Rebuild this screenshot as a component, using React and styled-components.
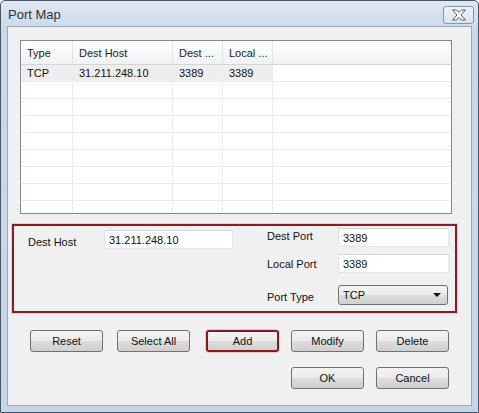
import React from "react";
import styled, { createGlobalStyle } from "styled-components";

const Global = createGlobalStyle`
  html, body { margin: 0; padding: 0; background: #fff; }
  body { font-family: "Liberation Sans", Arial, sans-serif; font-size: 11px; }
`;

const Window = styled.div`
  width: 479px;
  height: 413px;
  box-sizing: border-box;
  border: 1px solid #4a5563;
  border-radius: 5px 5px 0 0;
  background: linear-gradient(#dfe8f3, #c9d8ea 30px, #c6d6e9);
  display: flex;
  flex-direction: column;
`;

const TitleBar = styled.div`
  height: 25px;
  display: flex;
  align-items: center;
  justify-content: space-between;
  padding: 0 4px 0 7px;
`;

const Title = styled.span`
  font-size: 13px;
  color: #333;
  margin-top: 2px;
`;

const CloseButton = styled.div`
  width: 29px;
  height: 16px;
  margin-top: 2px;
  border: 1px solid #8994a3;
  border-radius: 3px;
  background: linear-gradient(#eef3f9, #d9e3ef);
  display: flex;
  align-items: center;
  justify-content: center;
`;

const Client = styled.div`
  flex: 1;
  margin: 0 6px 6px 6px;
  border: 1px solid #9aa8ba;
  background: #f0f0f0;
  display: flex;
  flex-direction: column;
`;

const List = styled.div`
  margin: 13px 0 0 12px;
  width: 432px;
  height: 174px;
  box-sizing: border-box;
  border: 1px solid #828790;
  background: #fff;
  overflow: hidden;
`;

const HeaderRow = styled.div`
  display: flex;
  height: 23px;
  background: linear-gradient(#ffffff, #f7f8f9 50%, #f1f2f4);
  border-bottom: 1px solid #d5d5d5;
`;

const HeadCell = styled.div`
  width: ${(p) => p.w}px;
  flex: ${(p) => (p.w ? "none" : 1)};
  box-sizing: border-box;
  padding-left: 6px;
  border-right: 1px solid ${(p) => (p.w ? "#e2e3e5" : "transparent")};
  display: flex;
  align-items: center;
  color: #1e1e1e;
  white-space: nowrap;
`;

const Row = styled.div`
  display: flex;
  height: 16px;
  border-bottom: 1px solid #ececec;
  &:first-of-type { height: 17px; }
`;

const Cell = styled.div`
  width: ${(p) => p.w}px;
  flex: ${(p) => (p.w ? "none" : 1)};
  box-sizing: border-box;
  padding-left: 6px;
  border-right: 1px solid ${(p) => (p.w ? "#ececec" : "transparent")};
  background: ${(p) => (p.sel ? "#eeeeee" : "transparent")};
  display: flex;
  align-items: center;
  color: #111;
`;

const Group = styled.div`
  margin: 10px 0 0 4px;
  width: 445px;
  height: 89px;
  box-sizing: border-box;
  border: 2px solid #851d22;
  box-shadow: 0 0 0 1px #f3c9cb;
  display: flex;
  padding: 2px 0 0 14px;
`;

const LeftCol = styled.div`
  display: flex;
  align-items: center;
  height: 19px;
  width: 239px;
  margin-top: 2px;
`;

const RightCol = styled.div`
  display: flex;
  flex-direction: column;
`;

const Field = styled.div`
  display: flex;
  align-items: center;
  height: ${(p) => p.h || 19}px;
  margin-top: ${(p) => p.top || 0}px;
`;

const Label = styled.span`
  width: ${(p) => p.w}px;
  color: #111;
  position: relative;
  top: ${(p) => p.shift || 0}px;
`;

const Input = styled.div`
  width: ${(p) => p.w}px;
  height: 19px;
  box-sizing: border-box;
  border: 1px solid #e2e5e9;
  border-top-color: #d3d7dc;
  background: #fff;
  padding-left: 4px;
  display: flex;
  align-items: center;
  color: #111;
`;

const Select = styled.div`
  width: 110px;
  height: 20px;
  box-sizing: border-box;
  border: 1px solid #707070;
  border-radius: 3px;
  background: linear-gradient(#f2f2f2, #ebebeb 50%, #dddddd 50%, #cfcfcf);
  display: flex;
  align-items: center;
  justify-content: space-between;
  padding: 0 6px 0 4px;
  color: #111;
`;

const Arrow = styled.span`
  width: 0;
  height: 0;
  border-left: 4px solid transparent;
  border-right: 4px solid transparent;
  border-top: 4px solid #111;
`;

const Buttons = styled.div`
  display: grid;
  grid-template-columns: 87px 89px 85px 85px 73px;
  row-gap: 15px;
  margin: 17px 0 0 22px;
`;

const Button = styled.div`
  grid-column: ${(p) => p.col || "auto"};
  width: 73px;
  height: 22px;
  box-sizing: border-box;
  border: ${(p) => (p.focus ? "2px solid #7e1d22" : "1px solid #707070")};
  box-shadow: ${(p) => (p.focus ? "0 0 0 1px #f0c6c8" : "none")};
  border-radius: 3px;
  background: linear-gradient(#f2f2f2, #ebebeb 50%, #dddddd 50%, #cfcfcf);
  display: flex;
  align-items: center;
  justify-content: center;
  color: #111;
`;

const cols = [52, 100, 50, 50];

export default function App() {
  return (
    <>
      <Global />
      <Window>
        <TitleBar>
          <Title>Port Map</Title>
          <CloseButton>
            <svg width="16" height="12" viewBox="0 0 16 12">
              <path
                d="M1.5 1h4l2.5 2.5 2.5-2.5h4l-4.5 5 4.5 5h-4l-2.5-2.5-2.5 2.5h-4l4.5-5z"
                fill="#fff"
                stroke="#4f5a68"
                strokeWidth="1"
                strokeLinejoin="round"
              />
            </svg>
          </CloseButton>
        </TitleBar>
        <Client>
          <List>
            <HeaderRow>
              <HeadCell w={cols[0]}>Type</HeadCell>
              <HeadCell w={cols[1]}>Dest Host</HeadCell>
              <HeadCell w={cols[2]}>Dest ...</HeadCell>
              <HeadCell w={cols[3]}>Local ...</HeadCell>
              <HeadCell />
            </HeaderRow>
            <Row>
              <Cell w={cols[0]} sel>TCP</Cell>
              <Cell w={cols[1]} sel>31.211.248.10</Cell>
              <Cell w={cols[2]} sel>3389</Cell>
              <Cell w={cols[3]} sel>3389</Cell>
              <Cell />
            </Row>
            {Array.from({ length: 8 }).map((_, i) => (
              <Row key={i}>
                {cols.map((w, j) => (
                  <Cell key={j} w={w} />
                ))}
                <Cell />
              </Row>
            ))}
          </List>

          <Group>
            <LeftCol>
              <Label w={76} shift={2}>Dest Host</Label>
              <Input w={129}>31.211.248.10</Input>
            </LeftCol>
            <RightCol>
              <Field>
                <Label w={71} shift={-2}>Dest Port</Label>
                <Input w={111}>3389</Input>
              </Field>
              <Field top={7}>
                <Label w={71}>Local Port</Label>
                <Input w={111}>3389</Input>
              </Field>
              <Field top={12} h={20}>
                <Label w={71} shift={2}>Port Type</Label>
                <Select>
                  TCP
                  <Arrow />
                </Select>
              </Field>
            </RightCol>
          </Group>

          <Buttons>
            <Button>Reset</Button>
            <Button>Select All</Button>
            <Button focus>Add</Button>
            <Button>Modify</Button>
            <Button>Delete</Button>
            <Button col={4}>OK</Button>
            <Button col={5}>Cancel</Button>
          </Buttons>
        </Client>
      </Window>
    </>
  );
}
